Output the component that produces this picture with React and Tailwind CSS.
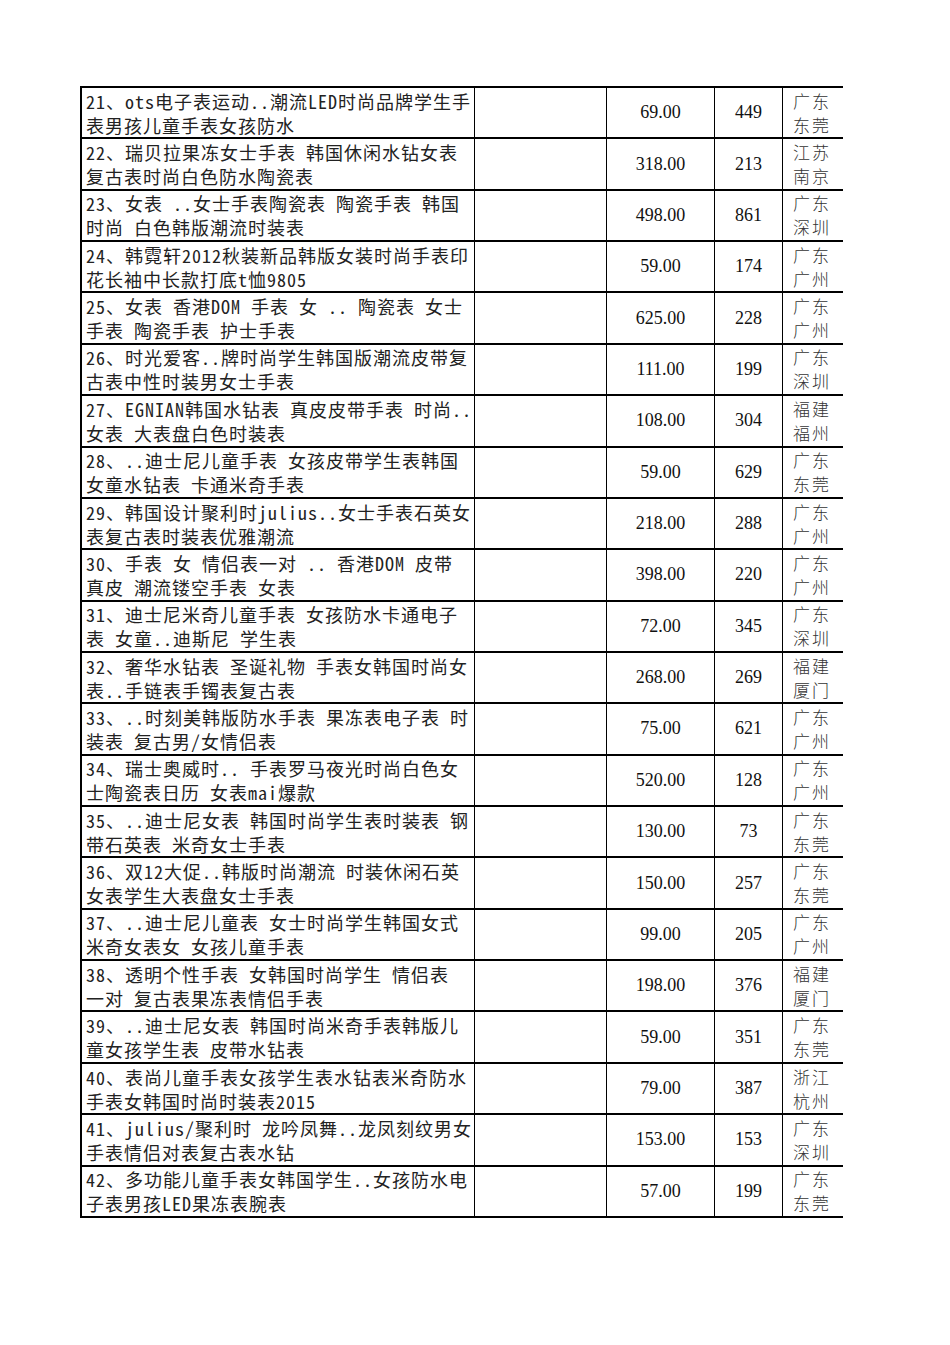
const rows = [
  ['21、ots电子表运动..潮流LED时尚品牌学生手', '表男孩儿童手表女孩防水', '69.00', '449', '广东', '东莞'],
  ['22、瑞贝拉果冻女士手表 韩国休闲水钻女表', '复古表时尚白色防水陶瓷表', '318.00', '213', '江苏', '南京'],
  ['23、女表 ..女士手表陶瓷表 陶瓷手表 韩国', '时尚 白色韩版潮流时装表', '498.00', '861', '广东', '深圳'],
  ['24、韩霓轩2012秋装新品韩版女装时尚手表印', '花长袖中长款打底t恤9805', '59.00', '174', '广东', '广州'],
  ['25、女表 香港DOM 手表 女 .. 陶瓷表 女士', '手表 陶瓷手表 护士手表', '625.00', '228', '广东', '广州'],
  ['26、时光爱客..牌时尚学生韩国版潮流皮带复', '古表中性时装男女士手表', '111.00', '199', '广东', '深圳'],
  ['27、EGNIAN韩国水钻表 真皮皮带手表 时尚..', '女表 大表盘白色时装表', '108.00', '304', '福建', '福州'],
  ['28、..迪士尼儿童手表 女孩皮带学生表韩国', '女童水钻表 卡通米奇手表', '59.00', '629', '广东', '东莞'],
  ['29、韩国设计聚利时julius..女士手表石英女', '表复古表时装表优雅潮流', '218.00', '288', '广东', '广州'],
  ['30、手表 女 情侣表一对 .. 香港DOM 皮带', '真皮 潮流镂空手表 女表', '398.00', '220', '广东', '广州'],
  ['31、迪士尼米奇儿童手表 女孩防水卡通电子', '表 女童..迪斯尼 学生表', '72.00', '345', '广东', '深圳'],
  ['32、奢华水钻表 圣诞礼物 手表女韩国时尚女', '表..手链表手镯表复古表', '268.00', '269', '福建', '厦门'],
  ['33、..时刻美韩版防水手表 果冻表电子表 时', '装表 复古男/女情侣表', '75.00', '621', '广东', '广州'],
  ['34、瑞士奥威时.. 手表罗马夜光时尚白色女', '士陶瓷表日历 女表mai爆款', '520.00', '128', '广东', '广州'],
  ['35、..迪士尼女表 韩国时尚学生表时装表 钢', '带石英表 米奇女士手表', '130.00', '73', '广东', '东莞'],
  ['36、双12大促..韩版时尚潮流 时装休闲石英', '女表学生大表盘女士手表', '150.00', '257', '广东', '东莞'],
  ['37、..迪士尼儿童表 女士时尚学生韩国女式', '米奇女表女 女孩儿童手表', '99.00', '205', '广东', '广州'],
  ['38、透明个性手表 女韩国时尚学生 情侣表', '一对 复古表果冻表情侣手表', '198.00', '376', '福建', '厦门'],
  ['39、..迪士尼女表 韩国时尚米奇手表韩版儿', '童女孩学生表 皮带水钻表', '59.00', '351', '广东', '东莞'],
  ['40、表尚儿童手表女孩学生表水钻表米奇防水', '手表女韩国时尚时装表2015', '79.00', '387', '浙江', '杭州'],
  ['41、julius/聚利时 龙吟凤舞..龙凤刻纹男女', '手表情侣对表复古表水钻', '153.00', '153', '广东', '深圳'],
  ['42、多功能儿童手表女韩国学生..女孩防水电', '子表男孩LED果冻表腕表', '57.00', '199', '广东', '东莞'],
];

const cjk = "font-['Noto_Sans_Mono_CJK_SC','Noto_Sans_CJK_SC',sans-serif]";

function Row({ r }) {
  return (
    <div className="flex h-[51.36px] border-b-2 border-black">
      <div className={`flex w-[393px] flex-col justify-center border-r border-black pl-[4px] text-[18px] leading-[24px] tracking-[1px] whitespace-pre text-[#222] ${cjk}`}>
        <span>{r[0]}</span>
        <span>{r[1]}</span>
      </div>
      <div className="w-[132px] border-r border-black" />
      <div className="flex w-[108px] items-center justify-center border-r border-black font-['Liberation_Serif',serif] text-[18px] text-[#111]">
        {r[2]}
      </div>
      <div className="flex w-[68px] items-center justify-center border-r border-black font-['Liberation_Serif',serif] text-[18px] text-[#111]">
        {r[3]}
      </div>
      <div className="flex w-[58px] flex-col justify-center pl-[10px] font-['Noto_Sans_CJK_SC',sans-serif] text-[17px] font-light leading-[24px] tracking-[2px] text-[#333]">
        <span>{r[4]}</span>
        <span>{r[5]}</span>
      </div>
    </div>
  );
}

export default function App() {
  return (
    <div className="min-h-[1345px] w-[950px] bg-white pt-[86px]">
      <div className="ml-[80px] w-[763px] border-l-2 border-t-2 border-black">
        {rows.map((r, i) => (
          <Row key={i} r={r} />
        ))}
      </div>
    </div>
  );
}
